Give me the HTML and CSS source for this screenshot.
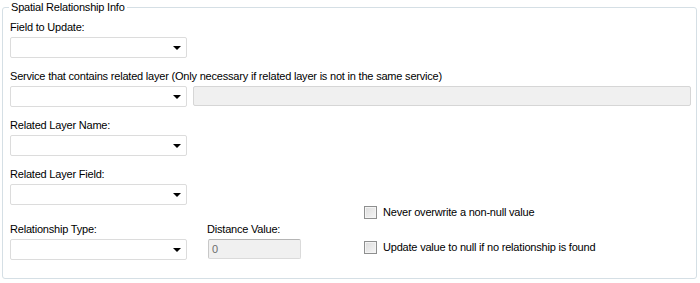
FILE: index.html
```html
<!DOCTYPE html>
<html>
<head>
<meta charset="utf-8">
<link rel="stylesheet" href="styles.css">
</head>
<body>
<fieldset class="group">
  <legend class="group-title">Spatial Relationship Info</legend>
  <div class="field first">
    <div class="label">Field to Update:</div>
    <div class="combo"><span class="arrow"></span></div>
  </div>
  <div class="field">
    <div class="label">Service that contains related layer (Only necessary if related layer is not in the same service)</div>
    <div class="row">
      <div class="combo"><span class="arrow"></span></div>
      <div class="textbox wide"></div>
    </div>
  </div>
  <div class="field">
    <div class="label">Related Layer Name:</div>
    <div class="combo"><span class="arrow"></span></div>
  </div>
  <div class="field">
    <div class="label">Related Layer Field:</div>
    <div class="combo"><span class="arrow"></span></div>
  </div>
  <div class="bottom">
    <div class="field rel">
      <div class="label">Relationship Type:</div>
      <div class="combo"><span class="arrow"></span></div>
    </div>
    <div class="field dist">
      <div class="label">Distance Value:</div>
      <div class="textbox num">0</div>
    </div>
    <div class="checks">
      <label class="check"><span class="box"></span><span>Never overwrite a non-null value</span></label>
      <label class="check"><span class="box"></span><span>Update value to null if no relationship is found</span></label>
    </div>
  </div>
</fieldset>
</body>
</html>
```
FILE: styles.css
```css
html, body {
  margin: 0;
  padding: 0;
  background: #ffffff;
}
body {
  font-family: "Liberation Sans", Arial, sans-serif;
  font-size: 11px;
  letter-spacing: -0.2px;
  color: #000000;
  width: 700px;
  height: 283px;
  overflow: hidden;
}
.group {
  box-sizing: border-box;
  margin: 0 3px 0 2px;
  padding: 0 4px 0 6px;
  height: 279px;
  border: 1px solid #d5dfe5;
  border-radius: 3px;
  min-width: 0;
}
.group-title {
  padding: 0 2px;
  line-height: 14px;
  margin-left: 0;
}
.field {
  margin-top: 11px;
  padding-left: 1px;
}
.field.first {
  margin-top: 6px;
}
.label {
  line-height: 14px;
  height: 14px;
  margin-bottom: 3px;
  white-space: nowrap;
}
.combo {
  box-sizing: border-box;
  width: 177px;
  height: 21px;
  border: 1px solid #dcdcdc;
  border-radius: 2px;
  background: #ffffff;
  position: relative;
  flex-shrink: 0;
}
.arrow {
  position: absolute;
  right: 5px;
  top: 8px;
  width: 0;
  height: 0;
  border-left: 4px solid transparent;
  border-right: 4px solid transparent;
  border-top: 4px solid #000000;
}
.row {
  display: flex;
  gap: 6px;
}
.textbox {
  box-sizing: border-box;
  height: 20px;
  background: #f0f0f0;
  border: 1px solid #d6d6d6;
  border-radius: 2px;
}
.textbox.wide {
  width: 498px;
}
.bottom {
  display: flex;
  margin-top: 0;
}
.bottom .field {
  margin-top: 17px;
}
.field.rel {
  width: 196px;
}
.field.dist {
  width: 157px;
}
.textbox.num {
  width: 93px;
  margin-top: 2px;
  margin-left: 1px;
  border-color: #b5b5b5 #dadada #dadada #c8c8c8;
  color: #6d6d6d;
  line-height: 18px;
  padding-left: 3px;
}
.checks {
  display: flex;
  flex-direction: column;
  gap: 21px;
  padding-top: 0;
}
.check {
  display: flex;
  align-items: center;
  gap: 6px;
  height: 14px;
  white-space: nowrap;
}
.box {
  box-sizing: border-box;
  width: 13px;
  height: 13px;
  border: 1px solid #8e8f8f;
  background: linear-gradient(135deg, #dcdcdc, #f6f6f6);
  box-shadow: inset 0 0 0 1px #f4f4f4;
}
```
